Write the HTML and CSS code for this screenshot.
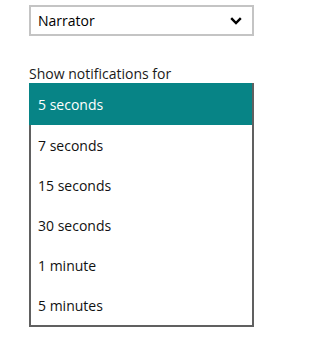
FILE: index.html
```html
<!DOCTYPE html>
<html>
<head>
<meta charset="utf-8">
<link rel="stylesheet" href="styles.css">
</head>
<body>
<div class="panel">
  <div class="select">
    <span class="select-text">Narrator</span>
    <svg class="chev" width="12" height="8" viewBox="0 0 12 8"><path d="M1.2 1.2 L6 6 L10.8 1.2" fill="none" stroke="#000" stroke-width="2.4"/></svg>
  </div>
  <div class="label">Show notifications for</div>
  <ul class="list">
    <li class="item selected">5 seconds</li>
    <li class="item">7 seconds</li>
    <li class="item">15 seconds</li>
    <li class="item">30 seconds</li>
    <li class="item">1 minute</li>
    <li class="item">5 minutes</li>
  </ul>
</div>
</body>
</html>
```
FILE: styles.css
```css
html, body {
  margin: 0;
  padding: 0;
  background: #fff;
}
body {
  font-family: "Open Sans", "Noto Sans", sans-serif;
  font-size: 14px;
  color: #000;
}
.panel {
  padding: 5px 0 0 29px;
  width: 225px;
}
.select {
  box-sizing: border-box;
  height: 31px;
  border: 2px solid #c4c4c4;
  display: flex;
  align-items: center;
  justify-content: space-between;
  padding: 0 10px 0 7px;
}
.select-text {
  line-height: 1;
}
.chev {
  display: block;
}
.label {
  margin-top: 29px;
  line-height: 18px;
  color: #1a1a1a;
}
.list {
  list-style: none;
  margin: 0;
  padding: 0;
  box-sizing: border-box;
  width: 225px;
  border: 2px solid #606060;
}
.item {
  height: 40px;
  display: flex;
  align-items: center;
  padding-left: 7px;
  color: #111;
}
.item.selected {
  background: #078486;
  color: #fff;
  margin: -2px 0 0 -2px;
  padding-left: 9px;
  height: 42px;
}
```
